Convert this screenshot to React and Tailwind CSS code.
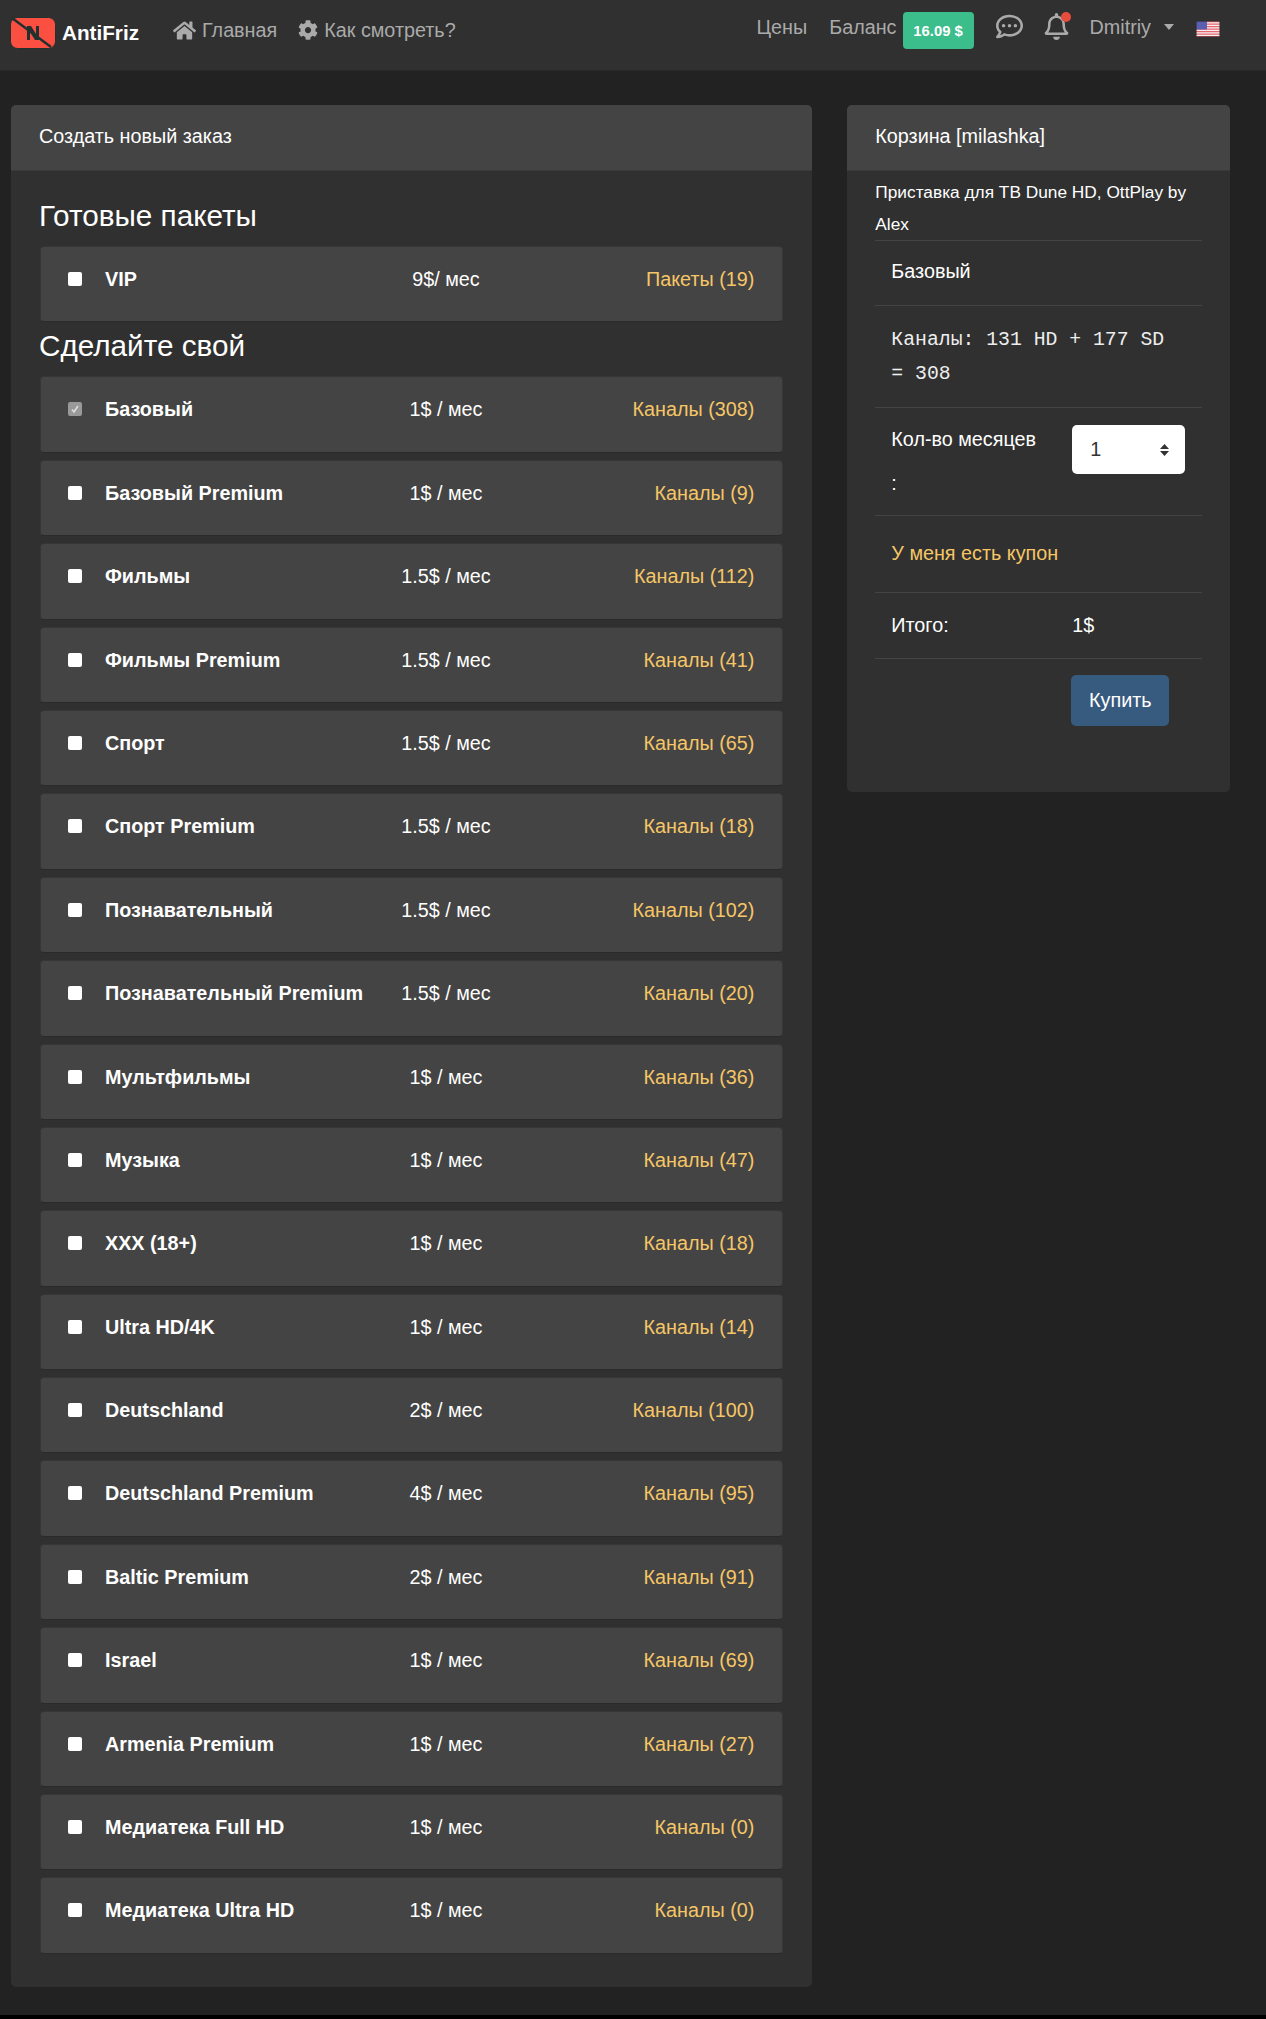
import React from 'react';
import { FaHome, FaCog, FaRegCommentDots, FaRegBell } from 'react-icons/fa';

const paquetes = [
  { nombre: 'Базовый', precio: '1$ / мес', canales: 'Каналы (308)', marcado: true },
  { nombre: 'Базовый Premium', precio: '1$ / мес', canales: 'Каналы (9)' },
  { nombre: 'Фильмы', precio: '1.5$ / мес', canales: 'Каналы (112)' },
  { nombre: 'Фильмы Premium', precio: '1.5$ / мес', canales: 'Каналы (41)' },
  { nombre: 'Спорт', precio: '1.5$ / мес', canales: 'Каналы (65)' },
  { nombre: 'Спорт Premium', precio: '1.5$ / мес', canales: 'Каналы (18)' },
  { nombre: 'Познавательный', precio: '1.5$ / мес', canales: 'Каналы (102)' },
  { nombre: 'Познавательный Premium', precio: '1.5$ / мес', canales: 'Каналы (20)' },
  { nombre: 'Мультфильмы', precio: '1$ / мес', canales: 'Каналы (36)' },
  { nombre: 'Музыка', precio: '1$ / мес', canales: 'Каналы (47)' },
  { nombre: 'XXX (18+)', precio: '1$ / мес', canales: 'Каналы (18)' },
  { nombre: 'Ultra HD/4K', precio: '1$ / мес', canales: 'Каналы (14)' },
  { nombre: 'Deutschland', precio: '2$ / мес', canales: 'Каналы (100)' },
  { nombre: 'Deutschland Premium', precio: '4$ / мес', canales: 'Каналы (95)' },
  { nombre: 'Baltic Premium', precio: '2$ / мес', canales: 'Каналы (91)' },
  { nombre: 'Israel', precio: '1$ / мес', canales: 'Каналы (69)' },
  { nombre: 'Armenia Premium', precio: '1$ / мес', canales: 'Каналы (27)' },
  { nombre: 'Медиатека Full HD', precio: '1$ / мес', canales: 'Каналы (0)' },
  { nombre: 'Медиатека Ultra HD', precio: '1$ / мес', canales: 'Каналы (0)' },
];

const Logo = () => (
  <svg width="46" height="32" viewBox="0 0 46 32" className="shrink-0">
    <rect x="0.5" y="0.5" width="45" height="31" rx="7" fill="#fb4f42" stroke="#20312f" />
    <path d="M17 9h4l5 8V9h3v14h-4l-5-8v8h-3z" fill="#20312f" />
    <path d="M2 1l39 29" stroke="#20312f" strokeWidth="2.5" />
  </svg>
);

const Bandera = () => (
  <svg width="24" height="16" viewBox="0 0 24 16" className="shrink-0">
    <rect width="24" height="16" fill="#f4f0f0" />
    {[0, 2.5, 5, 7.5, 10, 12.5, 15].map((y) => (
      <rect key={y} y={y} width="24" height="1.25" fill="#e8646e" />
    ))}
    <rect width="11" height="8.5" fill="#5a5fb0" />
    <rect x="0.25" y="0.25" width="23.5" height="15.5" fill="none" stroke="#222" strokeWidth="0.5" />
  </svg>
);

const Fila = ({ nombre, precio, canales, marcado, className }) => (
  <div className={`h-[76.4px] flex items-start pl-[27px] pr-[28px] pt-[17px] bg-[#444] rounded-[4px] border border-[#363636] border-b-[#2a2a2a] ${className}`}>
    <span className={`mt-[8px] w-[14px] h-[14px] shrink-0 rounded-[2px] flex items-center justify-center ${marcado ? 'bg-[#999]' : 'bg-white'}`}>
      {marcado && (
        <svg width="10" height="10" viewBox="0 0 10 10">
          <path d="M2 5.5l2 2.5 4-6" stroke="#ddd" strokeWidth="1.6" fill="none" />
        </svg>
      )}
    </span>
    <span className="ml-[23px] w-[270px] font-bold text-white text-[19.77px] leading-[30px]">{nombre}</span>
    <span className="w-[150px] text-center text-white text-[19.77px] leading-[30px] ml-[-4px]">{precio}</span>
    <span className="flex-1 text-right text-[#f6c666] text-[19.77px] leading-[30px]">{canales}</span>
  </div>
);

const Separador = () => <div className="h-px bg-[#444]" />;

export default function App() {
  return (
    <div className="bg-black pb-[4px] font-['Liberation_Sans',Arial,sans-serif]">
      <div className="bg-[#222] pb-[28px]">
        <nav className="h-[71px] bg-[#303030] border-b border-[#2a2a2a] flex items-start pl-[10px] text-[19.77px] leading-[30px] text-[#aaa]">
          <div className="flex items-center mt-[17px]">
            <Logo />
            <span className="ml-[6px] font-bold text-white text-[20.7px]">AntiFriz</span>
          </div>
          <a className="flex items-center ml-[34px] mt-[15px]">
            <FaHome className="text-[23px] mr-[6px]" />
            Главная
          </a>
          <a className="flex items-center ml-[21px] mt-[15px]">
            <FaCog className="text-[20px] mr-[6px]" />
            Как смотреть?
          </a>
          <div className="ml-auto flex items-start pr-[46px]">
            <span className="mt-[12px]">Цены</span>
            <span className="ml-[22px] mt-[12px]">Баланс</span>
            <span className="ml-[6px] mt-[12px] w-[71px] h-[37px] rounded-[4px] bg-[#3bbd8c] text-white font-bold text-[14.8px] flex items-center justify-center">16.09 $</span>
            <FaRegCommentDots className="ml-[22px] mt-[13px] text-[27px]" />
            <span className="relative ml-[20px] mt-[13px]">
              <FaRegBell className="text-[27px]" />
              <span className="absolute top-[-1px] -right-[1px] w-[10px] h-[10px] rounded-full bg-[#e74c3c]" />
            </span>
            <span className="ml-[20px] mt-[12px]">Dmitriy</span>
            <span className="ml-[13px] mt-[24px] w-0 h-0 border-x-[5.5px] border-x-transparent border-t-[6px] border-t-[#aaa]" />
            <span className="ml-[22px] mt-[21px]"><Bandera /></span>
          </div>
        </nav>

        <div className="flex items-start pl-[11px] pr-[36px] pt-[34px] gap-[35px]">
          <div className="w-[802px] bg-[#303030] rounded-[5px] pb-[26.4px]">
            <div className="h-[66px] bg-[#444] rounded-t-[5px] border-b border-[#3a3a3a] flex items-center pl-[28px] pb-[2px] text-white text-[19.77px]">Создать новый заказ</div>
            <div className="px-[29px]">
              <h2 className="text-white text-[29.7px] leading-[34px] pt-[28px] pb-[13px] -ml-[1px]">Готовые пакеты</h2>
              <Fila nombre="VIP" precio="9$/ мес" canales="Пакеты (19)" />
              <h2 className="text-white text-[29.7px] leading-[34px] pt-[7px] pb-[13px] -ml-[1px]">Сделайте свой</h2>
              {paquetes.map((p) => (
                <Fila key={p.nombre} {...p} className="mb-[7px]" />
              ))}
            </div>
          </div>

          <div className="w-[383px] h-[687px] bg-[#303030] rounded-[5px] text-white text-[19.77px]">
            <div className="h-[66px] bg-[#444] rounded-t-[5px] border-b border-[#3a3a3a] flex items-center pl-[28px] pb-[2px]">Корзина [milashka]</div>
            <div className="px-[28px]">
              <p className="text-[17.3px] leading-[32px] pt-[5px]">Приставка для ТВ Dune HD, OttPlay by Alex</p>
              <Separador />
              <div className="h-[64px] flex items-center pl-[16px] pb-[2px]">Базовый</div>
              <Separador />
              <div className="font-['Liberation_Mono',monospace] text-[19.77px] leading-[33.5px] pl-[16px] pr-[20px] pt-[18px] pb-[16px] text-[#eee]">Каналы: 131 HD + 177 SD = 308</div>
              <Separador />
              <div className="h-[107px] flex items-start pl-[16px] pt-[17px]">
                <span className="w-[181px] leading-[44px] -mt-[8px]">Кол-во месяцев<br />:</span>
                <span className="w-[113px] h-[49px] bg-white rounded-[5px] text-[#333] flex items-center justify-between pl-[18px] pr-[16px]">
                  1
                  <svg width="9" height="12" viewBox="0 0 9 12"><path d="M4.5 0L9 5H0zM4.5 12L0 7h9z" fill="#333" /></svg>
                </span>
              </div>
              <Separador />
              <div className="h-[76px] flex items-center pl-[16px] text-[#f6c666]">У меня есть купон</div>
              <Separador />
              <div className="h-[65px] flex items-center pl-[16px]">
                <span className="w-[181px]">Итого:</span>
                <span>1$</span>
              </div>
              <Separador />
              <div className="pl-[196px] pt-[16px]">
                <button className="w-[98px] h-[51px] rounded-[5px] bg-[#375a7f] text-white">Купить</button>
              </div>
            </div>
          </div>
        </div>
      </div>
    </div>
  );
}
